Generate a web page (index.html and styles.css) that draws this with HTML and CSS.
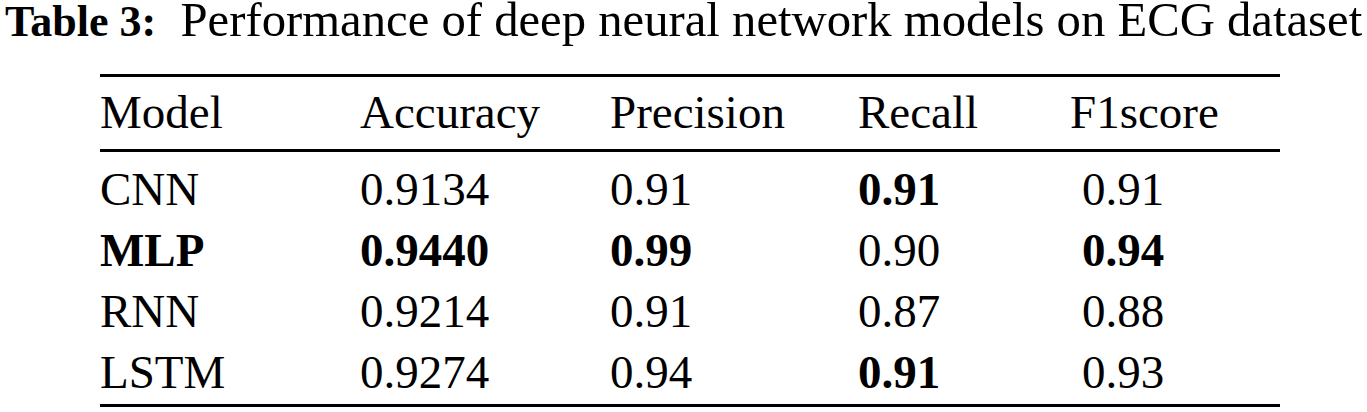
FILE: index.html
```html
<!DOCTYPE html>
<html>
    <head>
        <meta charset="utf-8">
        <title>Table 3</title>
        <link rel="stylesheet" href="styles.css">
    </head>
    <body>
        <div class="caption"><b>Table 3:</b>&nbsp; Performance of deep neural network models on ECG dataset</div>
        <table class="results">
            <colgroup>
                <col class="c_model">
                <col class="c_acc">
                <col class="c_prec">
                <col class="c_rec">
                <col class="c_f1">
            </colgroup>
            <thead>
                <tr>
                    <th>Model</th>
                    <th>Accuracy</th>
                    <th>Precision</th>
                    <th>Recall</th>
                    <th>F1score</th>
                </tr>
            </thead>
            <tbody>
                <tr class="first">
                    <td>CNN</td>
                    <td>0.9134</td>
                    <td>0.91</td>
                    <td class="best">0.91</td>
                    <td class="f1">0.91</td>
                </tr>
                <tr>
                    <td class="best">MLP</td>
                    <td class="best">0.9440</td>
                    <td class="best">0.99</td>
                    <td>0.90</td>
                    <td class="f1 best">0.94</td>
                </tr>
                <tr>
                    <td>RNN</td>
                    <td>0.9214</td>
                    <td>0.91</td>
                    <td>0.87</td>
                    <td class="f1">0.88</td>
                </tr>
                <tr class="last">
                    <td>LSTM</td>
                    <td>0.9274</td>
                    <td>0.94</td>
                    <td class="best">0.91</td>
                    <td class="f1">0.93</td>
                </tr>
            </tbody>
        </table>
    </body>
</html>
```

FILE: styles.css
```css
body{
    margin: 0; background: #fff; color: #000; font-family: "Liberation Serif", "Times New Roman", serif;
}
.caption{
    margin: 0 0 32px 5px; font-size: 48.7px; line-height: 40px; white-space: nowrap;
}
.caption b{
    font-size: 44px;
}

.results{
    margin-left: 100px; width: 1180px; table-layout: fixed; border-collapse: collapse; font-size: 47px;
}
.c_model{ width: 260px; }
.c_acc{ width: 250px; }
.c_prec{ width: 248px; }
.c_rec{ width: 212px; }
.c_f1{ width: 210px; }

.results th, .results td{
    padding: 0; text-align: left; font-weight: normal; line-height: 61px; white-space: nowrap;
}
.results thead tr{
    border-top: 3px solid #000; border-bottom: 3px solid #000;
}
.results th{
    padding: 5px 0 6px 0;
}
.results tr.first td{
    padding-top: 7px;
}
.results tr.last td{
    padding-bottom: 1px;
}
.results tr.last{
    border-bottom: 3px solid #000;
}
.results td.f1{
    padding-left: 12px;
}
.results .best{
    font-weight: bold;
}
```
